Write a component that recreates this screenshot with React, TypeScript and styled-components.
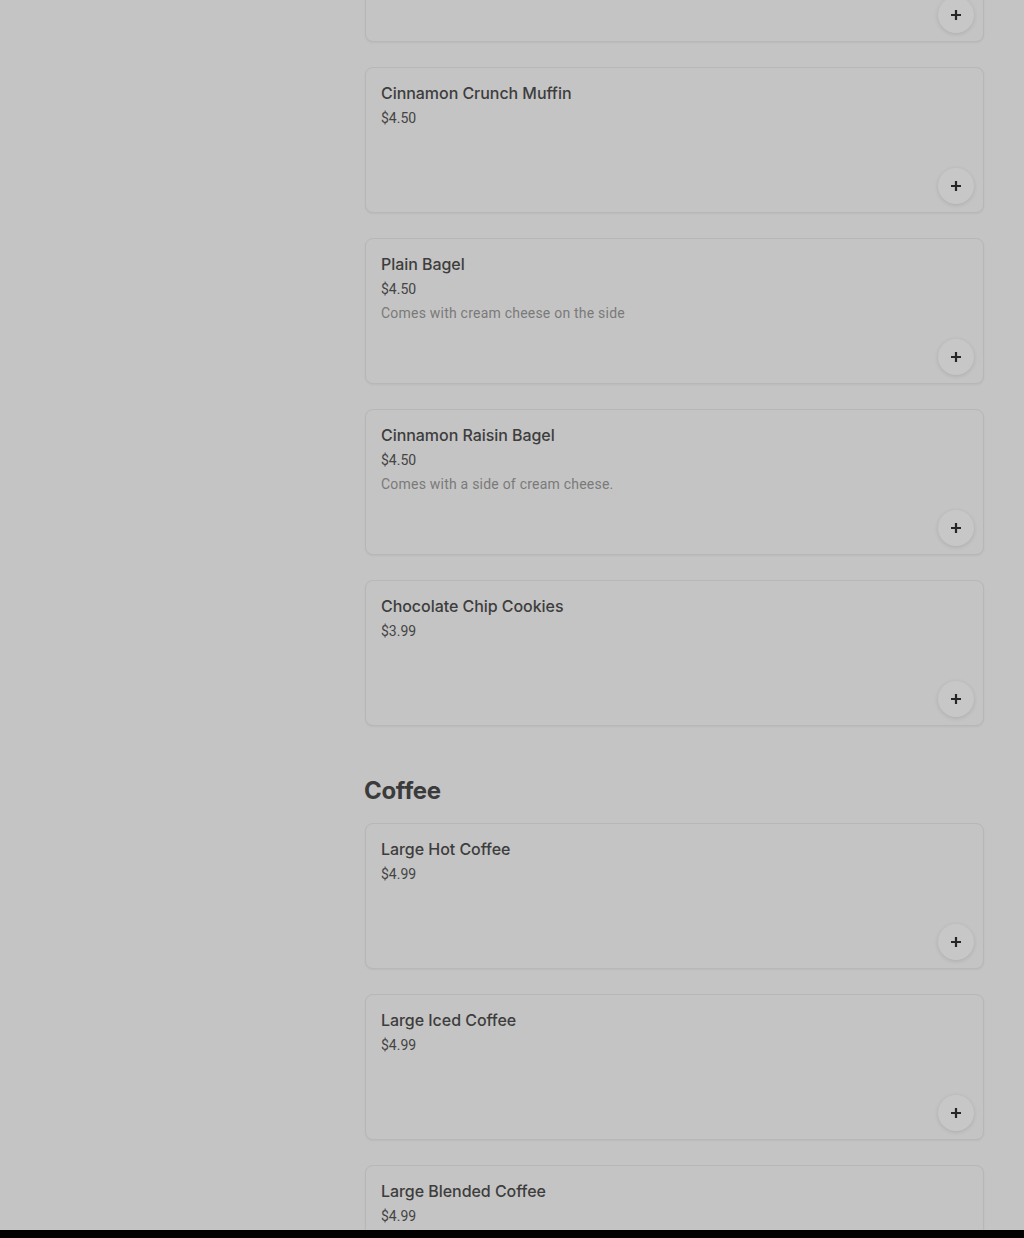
import React from "react";
import styled, { createGlobalStyle } from "styled-components";

const Global = createGlobalStyle`
  html, body { margin: 0; padding: 0; background: #c4c4c4; }
  body { font-family: Roboto, "Liberation Sans", Arial, sans-serif; overflow: hidden; }
`;

const Page = styled.div`
  display: grid;
  grid-template-columns: 364px 620px;
  height: 1238px;
  overflow: hidden;
  background: #c4c4c4;
`;

const Sidebar = styled.aside``;

const Main = styled.main`
  display: flex;
  flex-direction: column;
  margin-top: -104px;
`;

const Section = styled.section`
  display: flex;
  flex-direction: column;
  & + & { margin-top: 49px; }
`;

const SectionTitle = styled.h2`
  margin: 0 0 16px 0;
  font-family: Inter, Roboto, "Liberation Sans", sans-serif;
  font-weight: 700;
  font-size: 24px;
  line-height: 32px;
  color: #3b3b3b;
  letter-spacing: -0.3px;
`;

const List = styled.div`
  display: flex;
  flex-direction: column;
  gap: 25px;
`;

const Card = styled.article`
  box-sizing: border-box;
  height: 146px;
  margin-left: 1px;
  width: 619px;
  border: 1px solid #b7b7b7;
  border-radius: 8px;
  box-shadow: 0 1px 2px rgba(0, 0, 0, 0.05);
  background: #c4c4c4;
  padding: 15px 9px 8px 15px;
  display: flex;
  flex-direction: column;
`;

const Name = styled.div`
  font-family: Inter, Roboto, "Liberation Sans", sans-serif;
  font-size: 16px;
  font-weight: 500;
  line-height: 20px;
  color: #3d3d3d;
  letter-spacing: -0.05px;
`;

const Price = styled.div`
  margin-top: 5px;
  font-size: 14px;
  line-height: 20px;
  color: #444;
`;

const Desc = styled.div`
  margin-top: 4px;
  font-size: 14px;
  line-height: 20px;
  color: #7a7a7a;
  letter-spacing: 0.22px;
`;

const AddButton = styled.button`
  margin-top: auto;
  align-self: flex-end;
  width: 36px;
  height: 36px;
  border-radius: 50%;
  border: none;
  padding: 0;
  background: #c7c7c7;
  box-shadow: 0 1px 4px rgba(0, 0, 0, 0.12);
  display: flex;
  align-items: center;
  justify-content: center;
  color: #262626;
`;

const BottomBar = styled.div`
  position: fixed;
  left: 0;
  right: 0;
  bottom: 0;
  height: 8px;
  background: #000;
`;

const Plus = () => (
  <svg width="12" height="12" viewBox="0 0 12 12">
    <path d="M6 1v10M1 6h10" stroke="currentColor" strokeWidth="2.2" />
  </svg>
);

type Item = { name: string; price: string; desc?: string };

const bakery: Item[] = [
  { name: "Blueberry Muffin", price: "$4.50" },
  { name: "Cinnamon Crunch Muffin", price: "$4.50" },
  { name: "Plain Bagel", price: "$4.50", desc: "Comes with cream cheese on the side" },
  { name: "Cinnamon Raisin Bagel", price: "$4.50", desc: "Comes with a side of cream cheese." },
  { name: "Chocolate Chip Cookies", price: "$3.99" },
];

const coffee: Item[] = [
  { name: "Large Hot Coffee", price: "$4.99" },
  { name: "Large Iced Coffee", price: "$4.99" },
  { name: "Large Blended Coffee", price: "$4.99" },
];

const ItemCard = ({ item }: { item: Item }) => (
  <Card>
    <Name>{item.name}</Name>
    <Price>{item.price}</Price>
    {item.desc && <Desc>{item.desc}</Desc>}
    <AddButton aria-label="Add">
      <Plus />
    </AddButton>
  </Card>
);

export default function App() {
  return (
    <>
      <Global />
      <Page>
        <Sidebar />
        <Main>
          <Section>
            <List>
              {bakery.map((i) => (
                <ItemCard key={i.name} item={i} />
              ))}
            </List>
          </Section>
          <Section>
            <SectionTitle>Coffee</SectionTitle>
            <List>
              {coffee.map((i) => (
                <ItemCard key={i.name} item={i} />
              ))}
            </List>
          </Section>
        </Main>
      </Page>
      <BottomBar />
    </>
  );
}
